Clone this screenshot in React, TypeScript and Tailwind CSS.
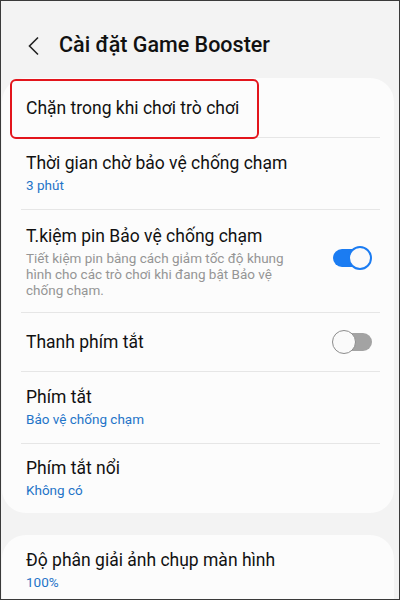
import React from "react";

const font = { fontFamily: "Roboto, 'Noto Sans', sans-serif" };

function Divider() {
  return <div className="ml-[19px] mr-[14px] h-px bg-[#e6e6e6]" />;
}

function Toggle({ on }: { on: boolean }) {
  return on ? (
    <div className="relative w-[39px] h-[24px] shrink-0">
      <div className="absolute left-0 top-[3px] w-[36px] h-[18px] rounded-full bg-[#1b7cf2]" />
      <div className="absolute right-0 top-0 w-[24px] h-[24px] rounded-full bg-[#fafafa] border-[2px] border-[#1b7cf2]" />
    </div>
  ) : (
    <div className="relative w-[40px] h-[24px] shrink-0">
      <div className="absolute right-0 top-[3px] w-[36px] h-[18px] rounded-full bg-[#a3a3a3]" />
      <div className="absolute left-0 top-0 w-[24px] h-[24px] rounded-full bg-[#fafafa] border-[1.5px] border-[#8c8c8c]" />
    </div>
  );
}

function Row({
  title,
  sub,
  h,
}: {
  title: string;
  sub?: string;
  h: string;
}) {
  return (
    <div className={`flex flex-col justify-center pl-[24px] ${h}`}>
      <div className="text-[17.5px] leading-[22px] text-[#111]">{title}</div>
      {sub && (
        <div className="text-[13.5px] leading-[20px] text-[#1f74c8] mt-[1px]">{sub}</div>
      )}
    </div>
  );
}

export default function App() {
  return (
    <div
      className="w-[400px] h-[600px] overflow-hidden bg-[#f3f3f3] border border-[#3a3a3a] flex flex-col"
      style={font}
    >
      {/* header */}
      <div className="h-[77px] flex items-center pl-[26px] pt-[12px] shrink-0">
        <svg width="14" height="20" viewBox="0 0 14 20" className="mr-[18px]">
          <path d="M11 1.5 L2.5 10 L11 18.5" fill="none" stroke="#222" strokeWidth="1.6" />
        </svg>
        <div className="text-[21.5px] font-medium text-[#111]">
          Cài đặt Game Booster
        </div>
      </div>

      {/* main card */}
      <div className="ml-[1px] mr-[5px] bg-[#fcfcfc] rounded-[24px] flex flex-col shrink-0">
        <div className="relative h-[59px] flex items-center pl-[24px]">
          <div className="absolute left-[8px] top-[1px] w-[249px] h-[60px] border-[2.5px] border-[#e3151c] rounded-[6px]" />
          <div className="text-[17.5px] leading-[22px] text-[#111] pt-[1px]">
            Chặn trong khi chơi trò chơi
          </div>
        </div>
        <Divider />
        <Row title="Thời gian chờ bảo vệ chống chạm" sub="3 phút" h="h-[71px]" />
        <Divider />
        <div className="h-[102px] flex items-center pl-[24px] pr-[22px]">
          <div className="flex-1 flex flex-col">
            <div className="text-[17.5px] leading-[22px] text-[#111]">
              T.kiệm pin Bảo vệ chống chạm
            </div>
            <div className="text-[13.5px] leading-[16px] text-[#959595] mt-[3px] w-[275px]">
              Tiết kiệm pin bằng cách giảm tốc độ khung hình cho các trò chơi khi đang bật Bảo vệ chống chạm.
            </div>
          </div>
          <div className="ml-[10px] mt-[-6px]">
            <Toggle on />
          </div>
        </div>
        <Divider />
        <div className="h-[58px] flex items-center pl-[24px] pr-[22px]">
          <div className="flex-1 text-[17.5px] leading-[22px] text-[#111]">Thanh phím tắt</div>
          <Toggle on={false} />
        </div>
        <Divider />
        <Row title="Phím tắt" sub="Bảo vệ chống chạm" h="h-[71px]" />
        <Divider />
        <Row title="Phím tắt nổi" sub="Không có" h="h-[69px]" />
      </div>

      {/* second card */}
      <div className="mt-[22px] ml-[1px] mr-[5px] bg-[#fcfcfc] rounded-t-[24px] flex-1 flex flex-col">
        <div className="h-[70px] flex flex-col justify-center pl-[24px]">
          <div className="text-[17.5px] leading-[22px] text-[#111]">
            Độ phân giải ảnh chụp màn hình
          </div>
          <div className="text-[13.5px] leading-[20px] text-[#1f74c8] mt-[1px]">100%</div>
        </div>
      </div>
    </div>
  );
}
